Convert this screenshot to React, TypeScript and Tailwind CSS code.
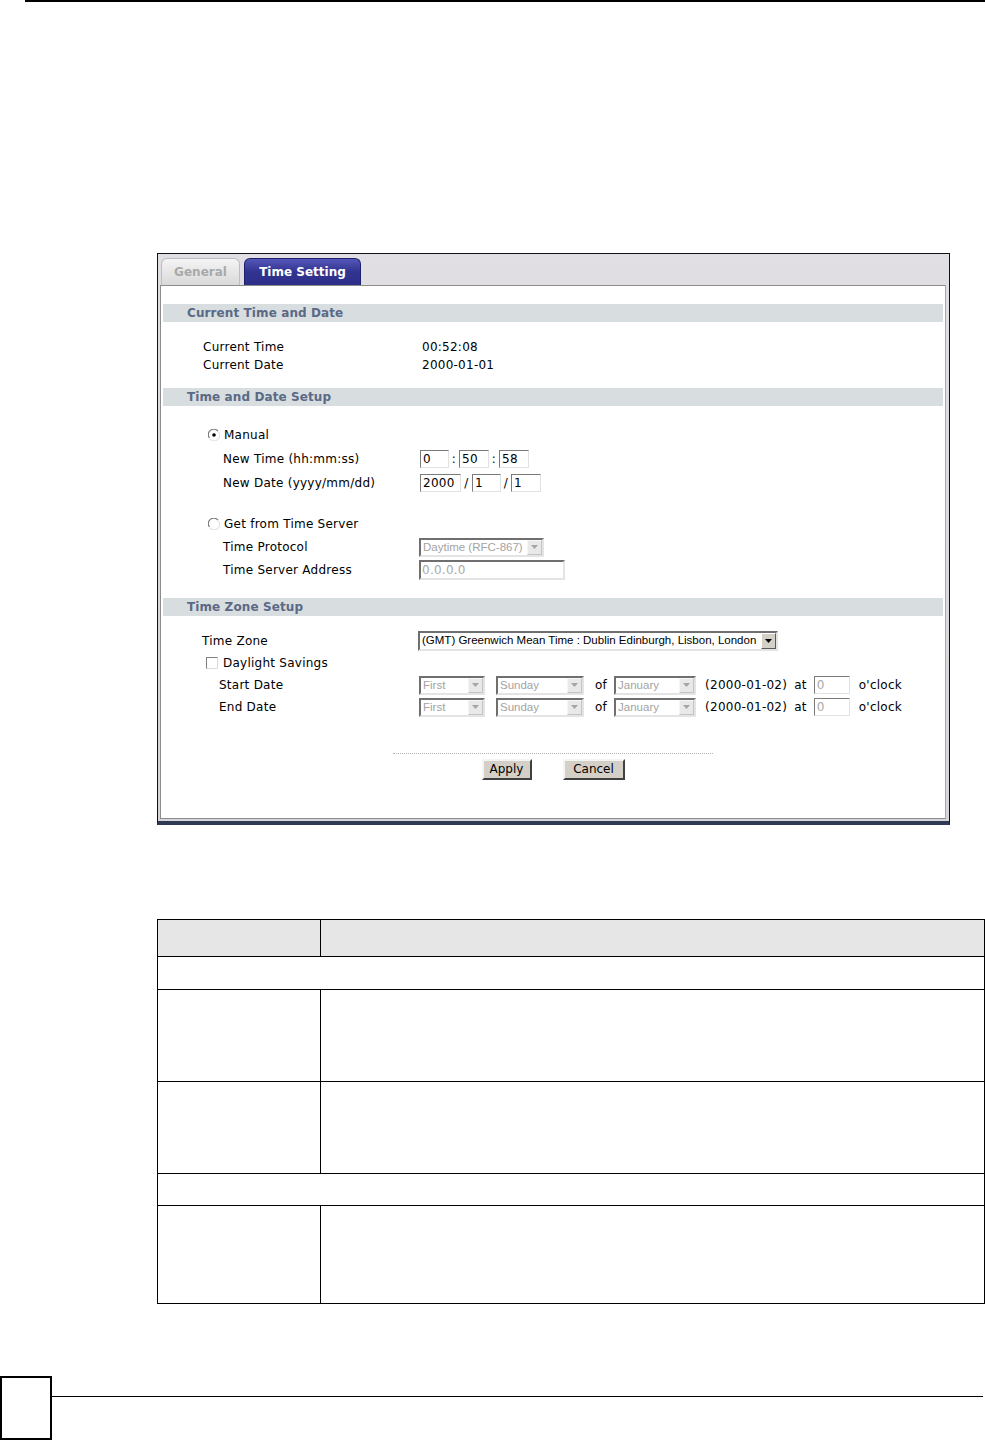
import React from 'react';

const ui = "font-['DejaVu_Sans',Verdana,sans-serif]";
const arial = "font-['Liberation_Sans',Arial,sans-serif]";

// Windows-style inset text box
const TextBox: React.FC<{ w: string; value: string; gray?: boolean }> = ({ w, value, gray }) => (
  <div
    className={`${w} h-[18px] bg-white border border-t-[#7b7b7b] border-l-[#7b7b7b] border-r-[#e2e2e2] border-b-[#e2e2e2] text-[12px] leading-[16px] pl-[2px] overflow-hidden whitespace-nowrap ${ui} ${gray ? 'text-[#a8a8a8]' : 'text-black'}`}
  >
    {value}
  </div>
);

const Arrow: React.FC<{ disabled?: boolean }> = ({ disabled }) => (
  <div
    className={`w-[15px] h-full flex items-center justify-center border ${
      disabled
        ? 'bg-[#e9e9e9] border-t-[#f6f6f6] border-l-[#f6f6f6] border-r-[#c4c4c4] border-b-[#c4c4c4]'
        : 'bg-[#d4d0c8] border-t-white border-l-white border-r-[#5a5a5a] border-b-[#5a5a5a]'
    }`}
  >
    <svg width="7" height="4" viewBox="0 0 7 4">
      <path d="M0 0h7L3.5 4z" fill={disabled ? '#a5a5a5' : '#000'} />
    </svg>
  </div>
);

const Select: React.FC<{ w: string; value: string; disabled?: boolean; h?: string }> = ({ w, value, disabled, h = 'h-[19px]' }) => (
  <div
    className={`${w} ${h} flex bg-white border-2 border-t-[#6f6f6f] border-l-[#6f6f6f] border-r-[#e4e4e4] border-b-[#e4e4e4] ${arial} text-[11.5px] tracking-normal`}
  >
    <div className={`flex-1 pl-[2px] leading-[15px] whitespace-nowrap overflow-hidden ${disabled ? 'text-[#a3a3a3]' : 'text-black'}`}>
      {value}
    </div>
    <Arrow disabled={disabled} />
  </div>
);

const Radio: React.FC<{ checked?: boolean }> = ({ checked }) => (
  <svg width="12" height="12" viewBox="0 0 12 12">
    <path d="M10 2.2A5.2 5.2 0 0 0 1.5 9" stroke="#7a7a7a" strokeWidth="1.2" fill="none" />
    <path d="M2 9.8A5.2 5.2 0 0 0 10.5 3" stroke="#e3e3e3" strokeWidth="1.2" fill="none" />
    <circle cx="6" cy="6" r="4" fill="#fff" />
    {checked && <circle cx="6" cy="6" r="1.8" fill="#000" />}
  </svg>
);

const Checkbox: React.FC = () => (
  <div className="w-[12px] h-[12px] bg-white border border-t-[#808080] border-l-[#808080] border-r-[#dcdcdc] border-b-[#dcdcdc]" />
);

const SectionBar: React.FC<{ title: string; className?: string }> = ({ title, className = '' }) => (
  <div className={`mx-[2px] h-[18px] bg-[#d8dde0] flex items-center pl-[24px] text-[12px] tracking-[0.1px] font-bold text-[#5a6985] ${className}`}>
    {title}
  </div>
);

const Sep: React.FC<{ ch: string; w: string }> = ({ ch, w }) => (
  <span className={`${w} text-center text-[12px]`}>{ch}</span>
);

const DstRow: React.FC<{ label: string }> = ({ label }) => (
  <div className="flex items-center h-[22px]">
    <div className="w-[258px] pl-[58px]">{label}</div>
    <Select w="w-[66px]" value="First" disabled />
    <div className="w-[11px]" />
    <Select w="w-[88px]" value="Sunday" disabled />
    <span className="ml-[11px] mr-[7px]">of</span>
    <Select w="w-[82px]" value="January" disabled />
    <span className="ml-[9px]">(2000-01-02)</span>
    <span className="ml-[7px]">at</span>
    <div className="ml-[7px]">
      <TextBox w="w-[36px]" value="0" gray />
    </div>
    <span className="ml-[9px]">o'clock</span>
  </div>
);

const TimeSettingScreen: React.FC = () => (
  <div className={`ml-[157px] w-[793px] h-[572px] border border-[#111] border-b-[4px] border-b-[#2f3a55] bg-gradient-to-b from-[#e2dfe4] to-[#d8d5da] flex flex-col ${ui} text-[12px] tracking-[0.25px] text-black`}>
    {/* tabs */}
    <div className="h-[31px] flex items-end pl-[3px] gap-[4px] tracking-normal">
      <div className="w-[79px] h-[27px] rounded-t-[6px] border border-b-0 border-[#bdbdbd] bg-gradient-to-b from-[#f4f4f4] to-[#d9d9d9] flex items-center justify-center text-[12px] font-bold text-[#a9a9a9]">
        General
      </div>
      <div className="w-[117px] h-[27px] rounded-t-[6px] border border-b-0 border-[#1c1e6e] bg-gradient-to-b from-[#5557b8] via-[#31338f] to-[#2c2e8a] flex items-center justify-center text-[12px] font-bold text-white">
        Time Setting
      </div>
    </div>

    {/* panel */}
    <div className="flex-1 ml-[2px] mr-[3px] mb-[2px] bg-white border border-[#8c8c8c] border-r-[#a9a9a9] flex flex-col">
      <SectionBar title="Current Time and Date" className="mt-[18px]" />
      <div className="mt-[16px]">
        <div className="flex items-center h-[18px]">
          <div className="w-[261px] pl-[42px]">Current Time</div>
          <div>00:52:08</div>
        </div>
        <div className="flex items-center h-[18px]">
          <div className="w-[261px] pl-[42px]">Current Date</div>
          <div>2000-01-01</div>
        </div>
      </div>

      <SectionBar title="Time and Date Setup" className="mt-[14px]" />
      <div className="mt-[17px]">
        <div className="flex items-center h-[24px] pl-[47px] gap-[4px]">
          <Radio checked />
          <span>Manual</span>
        </div>
        <div className="flex items-center h-[24px]">
          <div className="w-[259px] pl-[62px]">New Time (hh:mm:ss)</div>
          <TextBox w="w-[29px]" value="0" />
          <Sep ch=":" w="w-[10px]" />
          <TextBox w="w-[30px]" value="50" />
          <Sep ch=":" w="w-[10px]" />
          <TextBox w="w-[30px]" value="58" />
        </div>
        <div className="flex items-center h-[24px]">
          <div className="w-[259px] pl-[62px]">New Date (yyyy/mm/dd)</div>
          <TextBox w="w-[41px]" value="2000" />
          <Sep ch="/" w="w-[11px]" />
          <TextBox w="w-[29px]" value="1" />
          <Sep ch="/" w="w-[10px]" />
          <TextBox w="w-[30px]" value="1" />
        </div>
      </div>

      <div className="mt-[17px]">
        <div className="flex items-center h-[24px] pl-[47px] gap-[4px]">
          <Radio />
          <span>Get from Time Server</span>
        </div>
        <div className="flex items-center h-[22px]">
          <div className="w-[258px] pl-[62px]">Time Protocol</div>
          <Select w="w-[125px]" value="Daytime (RFC-867)" disabled />
        </div>
        <div className="flex items-center h-[24px]">
          <div className="w-[258px] pl-[62px]">Time Server Address</div>
          <div className="w-[146px] h-[20px] bg-white border-2 border-t-[#6f6f6f] border-l-[#6f6f6f] border-r-[#e4e4e4] border-b-[#e4e4e4] pl-[1px] text-[12px] leading-[16px] text-[#a8a8a8]">
            0.0.0.0
          </div>
        </div>
      </div>

      <SectionBar title="Time Zone Setup" className="mt-[16px]" />
      <div className="mt-[14px]">
        <div className="flex items-center h-[22px]">
          <div className="w-[257px] pl-[41px]">Time Zone</div>
          <Select w="w-[360px]" h="h-[20px]" value="(GMT) Greenwich Mean Time : Dublin Edinburgh, Lisbon, London" />
        </div>
        <div className="flex items-center h-[22px] pl-[45px] gap-[5px]">
          <Checkbox />
          <span>Daylight Savings</span>
        </div>
        <DstRow label="Start Date" />
        <DstRow label="End Date" />
      </div>

      <div className="mt-[35px] mx-auto w-[320px] border-t border-dotted border-[#b5b5b5]" />
      <div className="mt-[5px] flex justify-center gap-[31px] tracking-normal">
        <button className="w-[50px] h-[21px] bg-[#d4d0c8] border-2 border-t-[#f4f4f4] border-l-[#f4f4f4] border-r-[#404040] border-b-[#404040] text-[12px] leading-[15px] text-black">
          Apply
        </button>
        <button className="w-[62px] h-[21px] bg-[#d4d0c8] border-2 border-t-[#f4f4f4] border-l-[#f4f4f4] border-r-[#404040] border-b-[#404040] text-[12px] leading-[15px] text-black">
          Cancel
        </button>
      </div>
    </div>
  </div>
);

const SplitRow: React.FC<{ h: string; head?: boolean; last?: boolean }> = ({ h, head, last }) => (
  <div className={`flex ${h} ${head ? 'bg-[#e6e6e6]' : ''} ${last ? '' : 'border-b border-black'}`}>
    <div className="w-[163px] border-r border-black" />
    <div className="flex-1" />
  </div>
);

const FullRow: React.FC<{ h: string }> = ({ h }) => <div className={`${h} border-b border-black`} />;

export default function App() {
  return (
    <div className="w-[985px] h-[1440px] bg-white flex flex-col overflow-hidden">
      <div className="ml-[25px] h-[2px] bg-black" />

      <div className="mt-[251px]">
        <TimeSettingScreen />
      </div>

      <div className="mt-[94px] ml-[157px] w-[828px] border border-black">
        <SplitRow h="h-[37px]" head />
        <FullRow h="h-[33px]" />
        <SplitRow h="h-[92px]" />
        <SplitRow h="h-[92px]" />
        <FullRow h="h-[32px]" />
        <SplitRow h="h-[97px]" last />
      </div>

      <div className="mt-auto h-[64px] flex">
        <div className="w-[52px] h-full border-2 border-black" />
        <div className="flex-1 mr-[2px] mt-[20px] h-0 border-t-[1.5px] border-black" />
      </div>
    </div>
  );
}
